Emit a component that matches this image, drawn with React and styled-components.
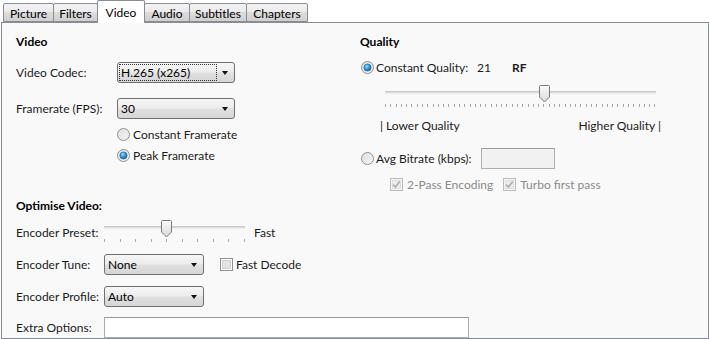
import React from "react";
import styled, { createGlobalStyle } from "styled-components";

const GlobalStyle = createGlobalStyle`
  html, body {
    margin: 0;
    padding: 0;
    background: #ffffff;
    overflow: hidden;
  }
  body {
    font-family: Lato, "Open Sans", sans-serif;
    font-size: 12px;
    color: #1b1b1b;
  }
`;

const Page = styled.div`
  width: 709px;
  height: 339px;
  padding-left: 1px;
  box-sizing: border-box;
`;

const TabBar = styled.div`
  display: flex;
  align-items: flex-end;
  height: 22px;
  padding-left: 2px;
  position: relative;
  z-index: 1;
`;

const Tab = styled.div`
  box-sizing: border-box;
  width: ${(p) => p.$w}px;
  height: ${(p) => (p.$active ? 23 : 19)}px;
  margin-left: -1px;
  margin-bottom: ${(p) => (p.$active ? -1 : 0)}px;
  display: flex;
  align-items: center;
  justify-content: center;
  padding-top: ${(p) => (p.$active ? 0 : 1)}px;
  border: 1px solid #898c95;
  border-bottom: ${(p) => (p.$active ? "none" : "1px solid #898c95")};
  border-radius: 2px 2px 0 0;
  background: ${(p) =>
    p.$active
      ? "#ffffff"
      : "linear-gradient(#f3f3f3 0%, #ebebeb 45%, #dddddd 50%, #cfcfcf 100%)"};
  color: #000;
  &:first-child {
    margin-left: 0;
  }
`;

const Panel = styled.div`
  box-sizing: border-box;
  height: 317px;
  border: 1px solid #898c95;
  background: #f9f9f9;
  padding: 8px 0 0 14px;
  overflow: hidden;
`;

const TopGrid = styled.div`
  display: grid;
  grid-template-columns: 344px 1fr;
`;

const Column = styled.div`
  display: flex;
  flex-direction: column;
`;

const Title = styled.div`
  height: 20px;
  margin-top: ${(p) => p.$mt || 0}px;
  display: flex;
  align-items: center;
  font-weight: 700;
  color: #000;
`;

const Row = styled.div`
  display: flex;
  align-items: center;
  height: ${(p) => p.$h}px;
  margin-top: ${(p) => p.$mt}px;
  margin-left: ${(p) => p.$ml || 0}px;
  width: ${(p) => (p.$w ? `${p.$w}px` : "auto")};
  justify-content: ${(p) => (p.$spread ? "space-between" : "flex-start")};
`;

const Label = styled.div`
  width: ${(p) => p.$w}px;
  flex-shrink: 0;
  white-space: nowrap;
`;

const Text = styled.span`
  white-space: nowrap;
  margin-left: ${(p) => p.$ml || 0}px;
  color: ${(p) => (p.$disabled ? "#8a8a8a" : "#1b1b1b")};
  font-weight: ${(p) => (p.$bold ? 700 : 400)};
`;

const SelectBox = styled.div`
  box-sizing: border-box;
  position: relative;
  width: ${(p) => p.$w}px;
  height: 21px;
  border: 1px solid #707070;
  border-radius: 3px;
  background: linear-gradient(#f6f6f6 0%, #ececec 48%, #e0e0e0 52%, #d6d6d6 100%);
  display: flex;
  align-items: center;
  padding-left: 3px;
  color: #000;
`;

const FocusRing = styled.div`
  position: absolute;
  left: 1px;
  top: 1px;
  width: ${(p) => p.$w}px;
  height: 15px;
  border: 1px dotted #333;
`;

const Arrow = styled.div`
  position: absolute;
  right: 6px;
  top: 8px;
  width: 0;
  height: 0;
  border-left: 3.5px solid transparent;
  border-right: 3.5px solid transparent;
  border-top: 4px solid #111;
`;

const Field = styled.div`
  box-sizing: border-box;
  width: ${(p) => p.$w}px;
  height: 21px;
  margin-left: ${(p) => p.$ml || 0}px;
  border: 1px solid #abadb3;
  border-top-color: #9a9a9a;
  background: ${(p) => (p.$disabled ? "#f1f1f1" : "#ffffff")};
`;

const SliderWrap = styled.div`
  position: relative;
  width: ${(p) => p.$w}px;
  height: 24px;
  margin-left: ${(p) => p.$ml || 0}px;
  flex-shrink: 0;
`;

const Track = styled.div`
  margin-top: 6px;
  height: 1px;
  border-top: 1px solid #c9c9c9;
  border-bottom: 1px solid #ededed;
  background: #dcdcdc;
`;

const Ticks = styled.div`
  margin-top: 10px;
  display: flex;
  justify-content: space-between;
`;

const Tick = styled.div`
  width: 1px;
  height: 3px;
  background: #a7a7a7;
`;

const ThumbHolder = styled.div`
  position: absolute;
  top: 0;
  width: 11px;
  height: 18px;
`;

const Gap = styled.div`
  width: ${(p) => p.$w}px;
  flex-shrink: 0;
`;

const Radio = ({ checked }) => (
  <svg width="13" height="13" viewBox="0 0 13 13" style={{ flexShrink: 0 }}>
    <defs>
      <linearGradient id="rbg" x1="0" y1="0" x2="1" y2="1">
        <stop offset="0" stopColor="#d8d8d8" />
        <stop offset="1" stopColor="#fbfbfb" />
      </linearGradient>
      <radialGradient id="rdot" cx="0.4" cy="0.35" r="0.7">
        <stop offset="0" stopColor="#8ee0ff" />
        <stop offset="0.5" stopColor="#2e9be0" />
        <stop offset="1" stopColor="#0b5a9c" />
      </radialGradient>
    </defs>
    <circle cx="6.5" cy="6.5" r="6" fill="url(#rbg)" stroke="#8e8f8f" strokeWidth="1" />
    <circle cx="6.5" cy="6.5" r="4.5" fill="none" stroke="#eaeaea" strokeWidth="1" />
    {checked && (
      <circle cx="6.5" cy="6.5" r="3.6" fill="url(#rdot)" stroke="#1d5c8c" strokeWidth="0.6" />
    )}
  </svg>
);

const Check = ({ checked, disabled }) => (
  <svg width="13" height="13" viewBox="0 0 13 13" style={{ flexShrink: 0 }}>
    <rect
      x="0.5"
      y="0.5"
      width="12"
      height="12"
      fill={disabled ? "#f4f4f4" : "#ffffff"}
      stroke={disabled ? "#bcbcbc" : "#8e8f8f"}
    />
    <rect
      x="2.5"
      y="2.5"
      width="8"
      height="8"
      fill={disabled ? "#ececec" : "#e4e4e4"}
      stroke={disabled ? "#e0e0e0" : "#d0d0d0"}
    />
    {checked && (
      <path
        d="M3.2 6.6 L5.4 9 L9.8 3.4"
        fill="none"
        stroke={disabled ? "#a6b0bc" : "#1b4f7f"}
        strokeWidth="1.6"
      />
    )}
  </svg>
);

const Thumb = () => (
  <svg width="11" height="18" viewBox="0 0 11 18">
    <defs>
      <linearGradient id="thg" x1="0" y1="0" x2="0" y2="1">
        <stop offset="0" stopColor="#fbfbfb" />
        <stop offset="1" stopColor="#d9d9d9" />
      </linearGradient>
    </defs>
    <path
      d="M1.5 0.5 H9.5 Q10.5 0.5 10.5 1.5 V12 L5.5 17 L0.5 12 V1.5 Q0.5 0.5 1.5 0.5 Z"
      fill="url(#thg)"
      stroke="#7a7a7a"
    />
  </svg>
);

const Slider = ({ width, ticks, value, ml }) => {
  const step = (width - 1) / (ticks - 1);
  const x = Math.round(value * step) - 5;
  return (
    <SliderWrap $w={width} $ml={ml}>
      <Track />
      <Ticks>
        {Array.from({ length: ticks }).map((_, i) => (
          <Tick key={i} />
        ))}
      </Ticks>
      <ThumbHolder style={{ left: x }}>
        <Thumb />
      </ThumbHolder>
    </SliderWrap>
  );
};

const Select = ({ width, value, focus }) => (
  <SelectBox $w={width}>
    {focus && <FocusRing $w={focus} />}
    {value}
    <Arrow />
  </SelectBox>
);

const tabs = [
  { name: "Picture", w: 51 },
  { name: "Filters", w: 45 },
  { name: "Video", w: 48, active: true },
  { name: "Audio", w: 46 },
  { name: "Subtitles", w: 58 },
  { name: "Chapters", w: 62 },
];

const App = () => {
  return (
    <Page>
      <GlobalStyle />
      <TabBar>
        {tabs.map((t) => (
          <Tab key={t.name} $w={t.w} $active={t.active}>
            {t.name}
          </Tab>
        ))}
      </TabBar>
      <Panel>
        <TopGrid>
          <Column>
            <Title>Video</Title>
            <Row $h={21} $mt={11}>
              <Label $w={101}>Video Codec:</Label>
              <Select width={118} value="H.265 (x265)" focus={96} />
            </Row>
            <Row $h={21} $mt={15}>
              <Label $w={101}>Framerate (FPS):</Label>
              <Select width={118} value="30" />
            </Row>
            <Row $h={18} $mt={6} $ml={101}>
              <Radio />
              <Text $ml={3}>Constant Framerate</Text>
            </Row>
            <Row $h={18} $mt={3} $ml={101}>
              <Radio checked />
              <Text $ml={3}>Peak Framerate</Text>
            </Row>
          </Column>
          <Column>
            <Title>Quality</Title>
            <Row $h={18} $mt={7} $ml={1}>
              <Radio checked />
              <Label $w={101} style={{ marginLeft: 2 }}>
                Constant Quality:
              </Label>
              <Label $w={35}>21</Label>
              <Text $bold>RF</Text>
            </Row>
            <Row $h={24} $mt={9}>
              <Slider width={271} ticks={52} value={30} ml={25} />
            </Row>
            <Row $h={16} $mt={8} $ml={20} $w={281} $spread>
              <Text>| Lower Quality</Text>
              <Text>Higher Quality |</Text>
            </Row>
            <Row $h={21} $mt={15} $ml={1}>
              <Radio />
              <Label $w={105} style={{ marginLeft: 2 }}>
                Avg Bitrate (kbps):
              </Label>
              <Field $w={74} $disabled />
            </Row>
            <Row $h={16} $mt={7} $ml={30}>
              <Check checked disabled />
              <Text $ml={4} $disabled>
                2-Pass Encoding
              </Text>
              <Gap $w={10} />
              <Check checked disabled />
              <Text $ml={4} $disabled>
                Turbo first pass
              </Text>
            </Row>
          </Column>
        </TopGrid>

        <Title $mt={3}>Optimise Video:</Title>
        <Row $h={24} $mt={5}>
          <Label $w={88}>Encoder Preset:</Label>
          <Slider width={141} ticks={10} value={4} />
          <Text $ml={9}>Fast</Text>
        </Row>
        <Row $h={21} $mt={10}>
          <Label $w={88}>Encoder Tune:</Label>
          <Select width={100} value="None" />
          <Gap $w={16} />
          <Check />
          <Text $ml={3}>Fast Decode</Text>
        </Row>
        <Row $h={21} $mt={11}>
          <Label $w={88}>Encoder Profile:</Label>
          <Select width={100} value="Auto" />
        </Row>
        <Row $h={21} $mt={10}>
          <Label $w={88}>Extra Options:</Label>
          <Field $w={365} />
        </Row>
      </Panel>
    </Page>
  );
};

export default App;
